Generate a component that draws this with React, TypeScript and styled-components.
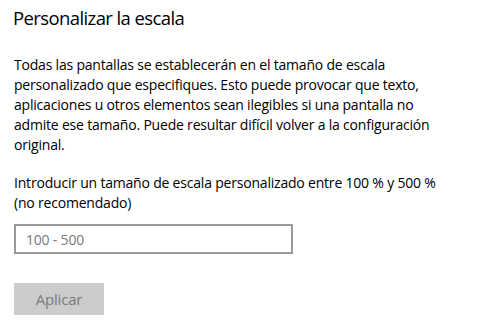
import styled, { createGlobalStyle } from "styled-components";

const GlobalStyle = createGlobalStyle`
    body {
        margin: 0;
        background: #ffffff;
        font-family: "Open Sans", "Noto Sans", sans-serif;
    }
`

export const StyledPage = styled.main`
    width: 482px;
    height: 328px;
    padding: 0 14px 0 13px;
    box-sizing: border-box;
    color: #000000;
    overflow: hidden;
`

export const StyledTitle = styled.h2`
    margin: 0;
    padding-top: 4px;
    font-size: 18.5px;
    font-weight: 400;
    line-height: 28px;
    letter-spacing: -0.6px;
`

export const StyledParagraph = styled.p<{ $top: number }>`
    margin: ${(p) => p.$top}px 0 0 1px;
    font-size: 14px;
    line-height: 20px;
    letter-spacing: -0.2px;
    white-space: nowrap;
`

export const StyledInput = styled.input`
    display: block;
    margin: 11px 0 0 1px;
    width: 279px;
    height: 30px;
    box-sizing: border-box;
    border: 2px solid #999999;
    padding: 0 10px;
    font-family: inherit;
    font-size: 14px;
    letter-spacing: -0.2px;
    color: #000;
    outline: none;

    &::placeholder {
        color: #7a7a7a;
    }
`

export const StyledButton = styled.button`
    display: block;
    margin: 29px 0 0 1px;
    width: 90px;
    height: 32px;
    border: none;
    background: #cccccc;
    color: #7a7a7a;
    font-family: inherit;
    font-size: 15px;
    letter-spacing: -0.2px;
`

export default function App() {
    return (
        <StyledPage>
            <GlobalStyle />
            <StyledTitle>Personalizar la escala</StyledTitle>
            <StyledParagraph $top={23}>
                Todas las pantallas se establecerán en el tamaño de escala<br />
                personalizado que especifiques. Esto puede provocar que texto,<br />
                aplicaciones u otros elementos sean ilegibles si una pantalla no<br />
                admite ese tamaño. Puede resultar difícil volver a la configuración<br />
                original.
            </StyledParagraph>
            <StyledParagraph $top={18}>
                Introducir un tamaño de escala personalizado entre 100 % y 500 %<br />
                (no recomendado)
            </StyledParagraph>
            <StyledInput placeholder="100 - 500" />
            <StyledButton disabled>Aplicar</StyledButton>
        </StyledPage>
    )
}
